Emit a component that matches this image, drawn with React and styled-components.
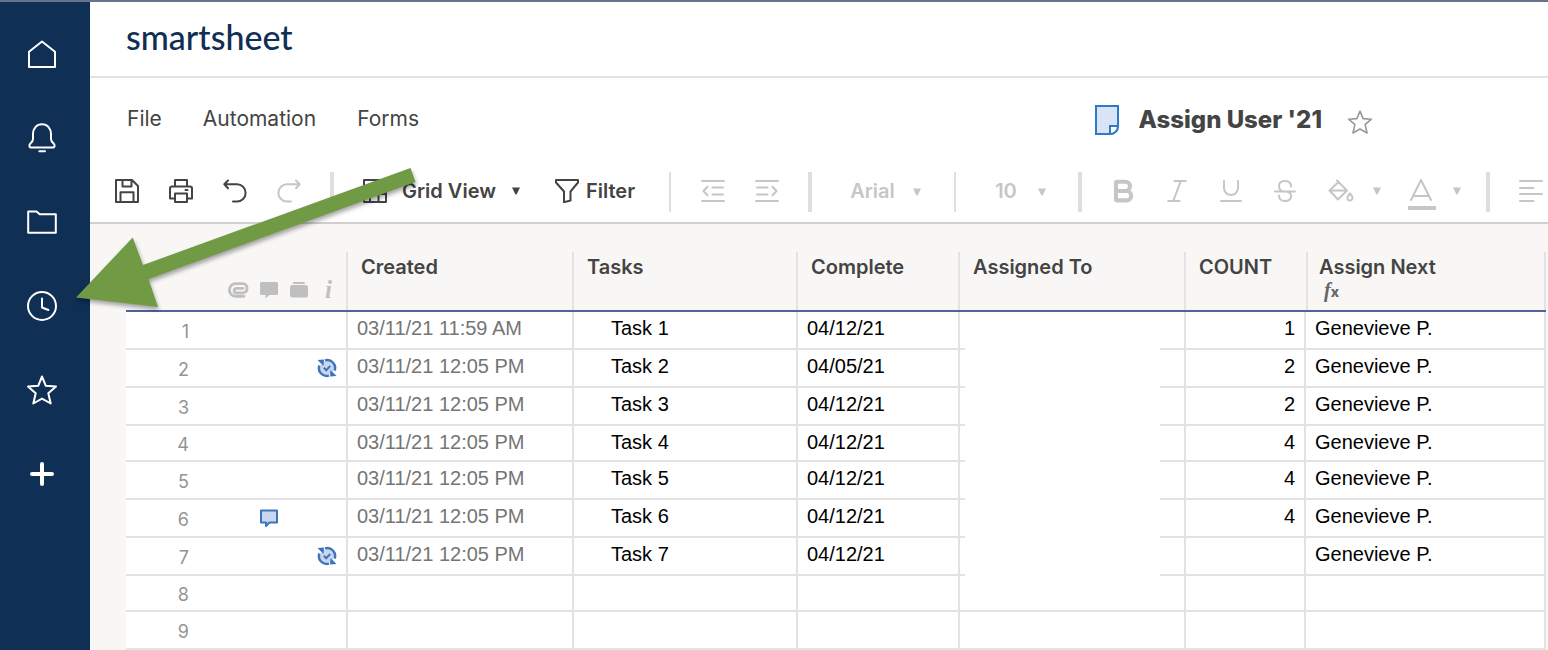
import { useState } from "react";
import styled, { createGlobalStyle, css } from "styled-components";
import { Bold, Italic } from "lucide-react";

const line = "#e3e3e3";
const ink = "#444444";
const muted = "#c6c6c6";
const navy = "#0f2f55";
const accent = "#4f639c";

const GlobalStyle = createGlobalStyle`
  * {
    box-sizing: border-box;
  }
  body {
    margin: 0;
    background: #ffffff;
    color: ${ink};
    font-family: Inter, "Liberation Sans", sans-serif;
  }
  button {
    border: 0;
    padding: 0;
    background: none;
    color: inherit;
    font: inherit;
    cursor: pointer;
  }
  svg {
    display: block;
    flex-shrink: 0;
  }
`;

// Page shell
const Page = styled.div`
  position: relative;
  display: flex;
  height: 100vh;
  overflow: hidden;
  border-top: 2px solid #68728f;
`;

const Sidebar = styled.nav`
  flex: 0 0 90px;
  display: flex;
  flex-direction: column;
  padding: 10px 6px 0 0;
  background: ${navy};
  color: #ffffff;
`;

const SideButton = styled.button`
  display: flex;
  align-items: center;
  justify-content: center;
  height: 84px;
`;

const Main = styled.main`
  flex: 1;
  min-width: 0;
  display: flex;
  flex-direction: column;
`;

const Brand = styled.header`
  display: flex;
  align-items: center;
  min-height: 76px;
  padding: 0 36px 4px;
  border-bottom: 2px solid ${line};
`;

const Logo = styled.a`
  color: ${navy};
  font-family: Lato, sans-serif;
  font-size: 34px;
  line-height: 44px;
  font-weight: 500;
  text-decoration: none;
`;

const MenuBar = styled.div`
  display: flex;
  align-items: center;
  min-height: 84px;
  padding: 0 175px 0 37px;
`;

const Menu = styled.div`
  display: flex;
  gap: 41px;
  margin-right: auto;
  padding-bottom: 2px;
`;

const MenuButton = styled.button`
  font-size: 21px;
  line-height: 28px;
`;

const SheetName = styled.div`
  display: flex;
  align-items: center;
  gap: 19px;
`;

const Title = styled.h1`
  margin: 0;
  font-size: 24px;
  line-height: 32px;
  font-weight: 800;
  white-space: nowrap;
`;

const StarButton = styled.button`
  margin-left: 6px;
  padding-top: 3px;
  color: #999999;
`;

// Toolbar
const Toolbar = styled.div`
  display: flex;
  align-items: center;
  min-height: 62px;
  padding-left: 10px;
  overflow: hidden;
  border-bottom: 2px solid #d0d0d0;

  > * {
    flex-shrink: 0;
  }
`;

const Divider = styled.span`
  width: ${(props) => (props.$thick ? "4px" : "2px")};
  height: 40px;
  margin: ${(props) => (props.$thick ? "0 14px" : "0 15px")};
  background: #dfdfdf;
`;

const ToolButton = styled.button`
  display: flex;
  align-items: center;
  justify-content: center;
  width: 54px;
  height: 40px;
  padding-bottom: 2px;
  color: ${(props) => (props.$off ? muted : ink)};
`;

const LabelButton = styled.button`
  display: flex;
  align-items: center;
  gap: ${(props) => props.$gap};
  height: 40px;
  padding: 0 ${(props) => props.$right} 2px 15px;
  font-size: 20px;
  font-weight: 600;
`;

const SplitButton = styled.button`
  display: flex;
  align-items: center;
  gap: 16px;
  width: 80px;
  height: 40px;
  padding: 0 0 2px 16px;
  color: ${muted};
`;

const Picker = styled.label`
  display: grid;
  align-items: center;
  width: ${(props) => props.$width};
  color: ${muted};

  > * {
    grid-area: 1 / 1;
  }

  svg {
    justify-self: end;
    margin-right: 17px;
    pointer-events: none;
  }
`;

const Select = styled.select`
  appearance: none;
  width: 100%;
  height: 40px;
  padding: 0 0 2px 24px;
  border: 0;
  background: none;
  color: ${muted};
  font: 600 20px Inter, sans-serif;
`;

// Grid
const SheetArea = styled.section`
  flex: 1;
  min-height: 0;
  padding: 28px 2px 0 36px;
  overflow: hidden;
  background: #f8f7f5;
`;

const Table = styled.table`
  width: 100%;
  table-layout: fixed;
  border-collapse: separate;
  border-spacing: 0;
`;

const Col = styled.col`
  width: ${(props) => props.$width};
`;

// Rules are drawn as backgrounds so the blue one runs on without a break
const HeadCell = styled.th`
  height: 60px;
  padding: 3px 14px 0 13px;
  background:
    linear-gradient(${accent}, ${accent}) bottom / 100% 2px no-repeat,
    linear-gradient(${line}, ${line}) right / ${(props) => (props.$open ? "0" : "2px")} 100% no-repeat,
    linear-gradient(${line}, ${line}) left / ${(props) => (props.$lead ? "2px" : "0")} 100% no-repeat;
  font-size: 20px;
  line-height: 24px;
  font-weight: 600;
  text-align: left;
  vertical-align: top;
`;

const HeadIcons = styled(HeadCell)`
  padding: 0 0 3px;
  vertical-align: bottom;
`;

const Row = styled.tr`
  height: 38px;
  background: #ffffff;

  &:nth-child(4n) {
    height: 36px;
  }
`;

const Cell = styled.td`
  padding: ${(props) => (props.$indent ? "4px 8px 0 37px" : "4px 9px 0")};
  border-right: 2px solid ${line};
  border-bottom: 2px solid ${line};
  color: ${(props) => (props.$soft ? "#757575" : "#000000")};
  font-family: "Liberation Sans", Arial, sans-serif;
  font-size: 20px;
  line-height: 24px;
  text-align: ${(props) => (props.$end ? "right" : "left")};
  vertical-align: top;
  white-space: nowrap;

  ${(props) =>
    props.$blank &&
    css`
      border-bottom: 0;
      background: linear-gradient(
          to right,
          ${line} 5px,
          transparent 5px,
          transparent calc(100% - 24px),
          ${line} calc(100% - 24px)
        )
        bottom / 100% 2px no-repeat;
    `}
`;

const NumberCell = styled.th`
  padding: 0;
  border-right: 2px solid ${line};
  border-bottom: 2px solid ${line};
  font-size: 18px;
  line-height: 24px;
  font-weight: 400;
`;

const Slots = styled.div`
  display: grid;
  grid-template-columns: 98px 30px 30px 30px 26px;
  align-items: center;
  justify-items: center;
  height: ${(props) => (props.$head ? "38px" : "28px")};
  color: #bfbfbf;
`;

const RowNumber = styled.span`
  justify-self: end;
  padding: 3px 35px 0 0;
  color: #949494;
`;

const Slot = styled.span`
  grid-column: ${(props) => props.$at};
`;

const InfoMark = styled.span`
  padding-left: 3px;
  font-family: "Liberation Serif", serif;
  font-size: 25px;
  font-style: italic;
  font-weight: 700;
`;

const Formula = styled.div`
  padding-left: 5px;
  color: #666666;
  font-family: "Liberation Serif", serif;
  font-size: 20px;
  line-height: 22px;
  font-style: italic;
  font-weight: 700;

  small {
    font-family: Inter, sans-serif;
    font-size: 14px;
    font-style: normal;
    font-weight: 800;
  }
`;

const Pointer = styled.svg`
  position: absolute;
  top: 158px;
  left: 66px;
  pointer-events: none;
  filter: drop-shadow(1px 3px 2px rgba(0, 0, 0, 0.35));
`;

// Icons
const Icon = ({ w = 24, h = 24, stroke = 2, children }) => (
  <svg
    width={w}
    height={h}
    viewBox={`0 0 ${w} ${h}`}
    fill="none"
    stroke="currentColor"
    strokeWidth={stroke}
    strokeLinecap="round"
    strokeLinejoin="round"
    aria-hidden="true"
  >
    {children}
  </svg>
);

const Caret = () => (
  <svg width="10" height="8" viewBox="0 0 10 8" fill="currentColor" aria-hidden="true">
    <path d="M1 0.5H9L5.8 7Q5 8 4.2 7Z" />
  </svg>
);

const SyncIcon = () => (
  <svg width="20" height="20" viewBox="0 0 20 20" fill="none" aria-hidden="true">
    <circle cx="10" cy="10" r="7" fill="#c9d7ee" />
    <path
      d="M8 2.4A7.8 7.8 0 0 1 17.6 12.5M12 17.6A7.8 7.8 0 0 1 2.4 7.5"
      stroke="#3f74bd"
      strokeWidth="2.5"
    />
    <path d="M0.5 2L7 1.5L6.5 8Z" fill="#3f74bd" />
    <path d="M19.5 18L13 18.5L13.5 12Z" fill="#3f74bd" />
    <path d="M6.8 9.8L9.2 12.2L13.2 8" stroke="#3f74bd" strokeWidth="2" />
  </svg>
);

const CommentIcon = () => (
  <svg width="20" height="20" viewBox="0 0 20 20" aria-hidden="true">
    <path
      d="M2 2.5H18V14.5H10.5L7 18V14.5H2Z"
      fill="#c9d7ee"
      stroke="#3f74bd"
      strokeWidth="2"
      strokeLinejoin="round"
    />
  </svg>
);

const starPath =
  "M16 2.5L19.8 11.8L30 12.6L22.3 19.3L24.7 29.5L16 24.6L7.3 29.5L9.7 19.3L2 12.6L12.2 11.8Z";

const sideItems = [
  { label: "Home", icon: <path d="M3 13.8L16 3.5L29 13.8V29H3Z" /> },
  {
    label: "Notifications",
    icon: (
      <path d="M16 2.3C10.5 2.3 7 6.5 7 12V17C7 19 6 20 4.6 21.3C2.6 23.2 3.2 25.6 5.5 25.6H26.5C28.8 25.6 29.4 23.2 27.4 21.3C26 20 25 19 25 17V12C25 6.5 21.5 2.3 16 2.3ZM13.3 29.3H19" />
    ),
  },
  { label: "Browse", icon: <path d="M2.2 5.5H10.5L13.7 8.3H29.8V26.8H2.2Z" /> },
  {
    label: "Recents",
    icon: (
      <>
        <circle cx="16" cy="16" r="14" />
        <path d="M16 8.5V17.5L22.4 20" />
      </>
    ),
  },
  { label: "Favorites", icon: <path d={starPath} /> },
  { label: "Create", icon: <path d="M16 6V26M6 16H26" strokeWidth="4" /> },
];

const rows = [
  { created: "03/11/21 11:59 AM", task: "Task 1", complete: "04/12/21", count: "1", next: "Genevieve P." },
  { created: "03/11/21 12:05 PM", task: "Task 2", complete: "04/05/21", count: "2", next: "Genevieve P.", mark: "sync" },
  { created: "03/11/21 12:05 PM", task: "Task 3", complete: "04/12/21", count: "2", next: "Genevieve P." },
  { created: "03/11/21 12:05 PM", task: "Task 4", complete: "04/12/21", count: "4", next: "Genevieve P." },
  { created: "03/11/21 12:05 PM", task: "Task 5", complete: "04/12/21", count: "4", next: "Genevieve P." },
  { created: "03/11/21 12:05 PM", task: "Task 6", complete: "04/12/21", count: "4", next: "Genevieve P.", mark: "comment" },
  { created: "03/11/21 12:05 PM", task: "Task 7", complete: "04/12/21", count: "", next: "Genevieve P.", mark: "sync" },
  {},
  {},
];

const FormatBar = () => {
  const [font, setFont] = useState("Arial");
  const [size, setSize] = useState("10");

  return (
    <Toolbar>
      <ToolButton aria-label="Save">
        <Icon>
          <path d="M1 1H17L23 7V23H1ZM7.5 1V7.5H16.5V1M5.5 23V13.3H18.5V23" />
        </Icon>
      </ToolButton>
      <ToolButton aria-label="Print">
        <Icon>
          <path d="M6 7V1H18V7M5.5 19.5H1V9.5Q1 7.5 3 7.5H21Q23 7.5 23 9.5V19.5H18.5M6 14.5H18V23H6ZM16.5 11H18.5" />
        </Icon>
      </ToolButton>
      <ToolButton aria-label="Undo">
        <Icon>
          <path d="M5 1.5L1.3 5.3L5 9.2M1.5 5.3H14A8.6 8.6 0 0 1 14 22.5H10" />
        </Icon>
      </ToolButton>
      <ToolButton aria-label="Redo" $off>
        <Icon>
          <path d="M19 1.5L22.7 5.3L19 9.2M22.5 5.3H10A8.6 8.6 0 0 0 10 22.5H14" />
        </Icon>
      </ToolButton>
      <Divider $thick />
      <LabelButton $gap="15px" $right="19px">
        <Icon>
          <path d="M1 1H23V23H1ZM1 7H23M7 7V23M15.5 7V23M1 15H23" />
        </Icon>
        Grid View
        <Caret />
      </LabelButton>
      <LabelButton $gap="7px" $right="19px">
        <Icon>
          <path d="M1 1H23V3.5L15.5 12.5V21.5L9 23.2V12.5L1 3.5Z" />
        </Icon>
        Filter
      </LabelButton>
      <Divider />
      <ToolButton aria-label="Outdent" $off>
        <Icon h={22}>
          <path d="M1 1H23M11.5 7.5H22M11.5 14.5H22M1 21H23M6.5 6.7L2.5 11L6.5 15.3" />
        </Icon>
      </ToolButton>
      <ToolButton aria-label="Indent" $off>
        <Icon h={22}>
          <path d="M1 1H23M2 7.5H12.5M2 14.5H12.5M1 21H23M17.5 6.7L21.5 11L17.5 15.3" />
        </Icon>
      </ToolButton>
      <Divider $thick />
      <Picker $width="113px">
        <Select aria-label="Font" value={font} onChange={(e) => setFont(e.target.value)}>
          <option>Arial</option>
          <option>Tahoma</option>
          <option>Verdana</option>
        </Select>
        <Caret />
      </Picker>
      <Divider />
      <Picker $width="93px">
        <Select aria-label="Font size" value={size} onChange={(e) => setSize(e.target.value)}>
          <option>8</option>
          <option>10</option>
          <option>12</option>
        </Select>
        <Caret />
      </Picker>
      <Divider $thick />
      <ToolButton aria-label="Bold" $off>
        <Bold size={28} strokeWidth={3.5} />
      </ToolButton>
      <ToolButton aria-label="Italic" $off>
        <Italic size={30} strokeWidth={1.7} />
      </ToolButton>
      <ToolButton aria-label="Underline" $off>
        <Icon w={22} h={22}>
          <path d="M4 1V8A7 7 0 0 0 18 8V1M1 21H21" />
        </Icon>
      </ToolButton>
      <ToolButton aria-label="Strikethrough" $off>
        <Icon w={22} h={22}>
          <path d="M17 6.5C17 3 15 1 11 1C7 1 5 3 5 6C5 9.5 7.5 11.5 11 11.5C15 11.5 17 13 17 16C17 19 15 21 11 21C7 21 5 19 5 15.5M1 11.5H21" />
        </Icon>
      </ToolButton>
      <SplitButton aria-label="Fill color">
        <Icon w={28}>
          <path d="M9 1.5L19 11.5L10 20.5L1.5 11.5L10.5 3M2 11.5H18.5M22 14.5Q25 18 24.5 19.5A2.7 2.7 0 0 1 19.3 19.5Q19 18 22 14.5Z" />
        </Icon>
        <Caret />
      </SplitButton>
      <SplitButton aria-label="Text color">
        <Icon w={28} h={38}>
          <path d="M3 28L13 8L23 28M5.5 24H20.5" />
          <path d="M0 36H28" strokeWidth="4" strokeLinecap="butt" />
        </Icon>
        <Caret />
      </SplitButton>
      <Divider $thick />
      <ToolButton aria-label="Align" $off>
        <Icon h={22}>
          <path d="M1 1H23M1 8H14.5M1 14H23M1 21H14.5" />
        </Icon>
      </ToolButton>
    </Toolbar>
  );
};

const Grid = () => (
  <SheetArea>
    <Table>
      <colgroup>
        <Col $width="222px" />
        <Col $width="226px" />
        <Col $width="224px" />
        <Col $width="162px" />
        <Col $width="226px" />
        <Col $width="120px" />
        <Col />
      </colgroup>
      <thead>
        <tr>
          <HeadIcons scope="col" aria-label="Row details">
            <Slots $head>
              <Slot $at={2}>
                <Icon w={22} h={16} stroke={2.8}>
                  <path d="M16 14.3H7.7A6.2 6.2 0 0 1 7.7 1.7H15A4.7 4.7 0 0 1 15 11H8.5A2 2 0 0 1 8.5 6.3H15" />
                </Icon>
              </Slot>
              <Slot $at={3}>
                <svg width="20" height="18" viewBox="0 0 20 18" fill="currentColor" aria-hidden="true">
                  <path d="M2.5 1H17.5Q19 1 19 2.5V12.5Q19 14 17.5 14H10.5L6.5 17.5V14H2.5Q1 14 1 12.5V2.5Q1 1 2.5 1Z" />
                </svg>
              </Slot>
              <Slot $at={4}>
                <svg width="20" height="18" viewBox="0 0 20 18" fill="currentColor" aria-hidden="true">
                  <rect x="4" y="1" width="12" height="2" rx="1" />
                  <rect x="1" y="4" width="18" height="12.5" rx="2.5" />
                </svg>
              </Slot>
              <InfoMark>i</InfoMark>
            </Slots>
          </HeadIcons>
          <HeadCell scope="col">Created</HeadCell>
          <HeadCell scope="col">Tasks</HeadCell>
          <HeadCell scope="col">Complete</HeadCell>
          <HeadCell scope="col">Assigned To</HeadCell>
          <HeadCell scope="col" $open>COUNT</HeadCell>
          <HeadCell scope="col" $lead>
            Assign Next
            <Formula>
              f<small>x</small>
            </Formula>
          </HeadCell>
        </tr>
      </thead>
      <tbody>
        {rows.map((row, i) => (
          <Row key={i}>
            <NumberCell scope="row">
              <Slots>
                <RowNumber>{i + 1}</RowNumber>
                {row.mark === "comment" && (
                  <Slot $at={3}>
                    <CommentIcon />
                  </Slot>
                )}
                {row.mark === "sync" && (
                  <Slot $at={5}>
                    <SyncIcon />
                  </Slot>
                )}
              </Slots>
            </NumberCell>
            <Cell $soft>{row.created}</Cell>
            <Cell $indent>{row.task}</Cell>
            <Cell>{row.complete}</Cell>
            <Cell $blank={i < 7} />
            <Cell $end>{row.count}</Cell>
            <Cell>{row.next}</Cell>
          </Row>
        ))}
      </tbody>
    </Table>
  </SheetArea>
);

const App = () => {
  return (
    <>
      <GlobalStyle />
      <Page>
        <Sidebar>
          {sideItems.map((item) => (
            <SideButton key={item.label} aria-label={item.label}>
              <Icon w={32} h={32}>
                {item.icon}
              </Icon>
            </SideButton>
          ))}
        </Sidebar>
        <Main>
          <Brand>
            <Logo href="#">smartsheet</Logo>
          </Brand>
          <MenuBar>
            <Menu>
              <MenuButton>File</MenuButton>
              <MenuButton>Automation</MenuButton>
              <MenuButton>Forms</MenuButton>
            </Menu>
            <SheetName>
              <svg width="24" height="30" viewBox="0 0 24 30" stroke="#2b7cc7" strokeWidth="2" aria-hidden="true">
                <path d="M1 1H23V21Q22.5 28.5 15 29H1Z" fill="#dbe4f7" />
                <path d="M15 29V21H23Q22.5 28.5 15 29Z" fill="#ffffff" />
              </svg>
              <Title>Assign User '21</Title>
              <StarButton aria-label="Add to favorites">
                <svg width="26" height="26" viewBox="0 0 32 32" fill="none" stroke="currentColor" strokeWidth="2" strokeLinejoin="round">
                  <path d={starPath} />
                </svg>
              </StarButton>
            </SheetName>
          </MenuBar>
          <FormatBar />
          <Grid />
        </Main>
        <Pointer width="360" height="160" viewBox="0 0 360 160" aria-hidden="true">
          <path d="M10 137.5L66.7 77.5L77 105L344.5 8L349.5 22L82.5 119L92 147Z" fill="#719a45" />
        </Pointer>
      </Page>
    </>
  );
};

export default App;
